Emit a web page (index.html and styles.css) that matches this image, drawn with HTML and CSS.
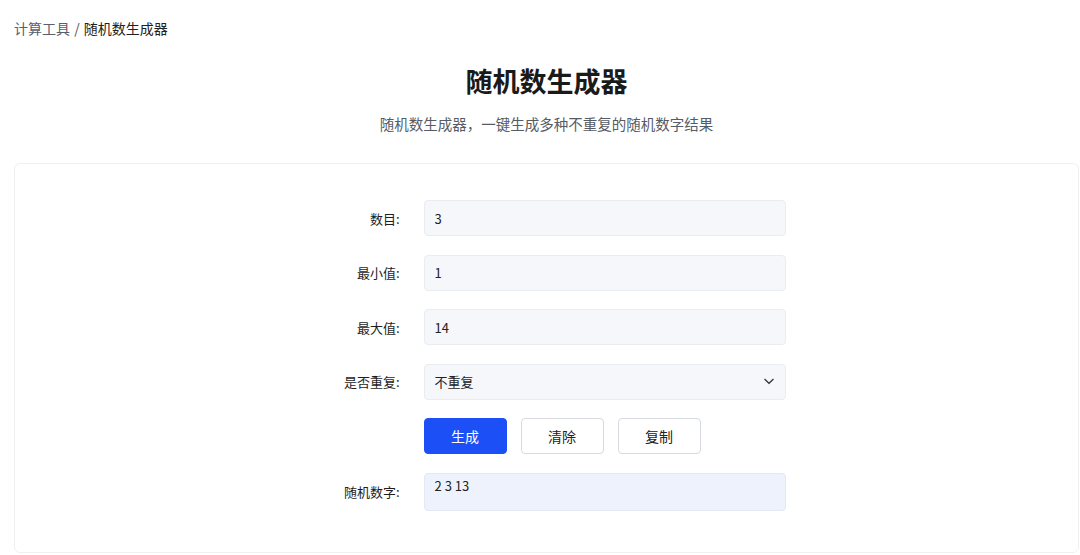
FILE: index.html
```html
<!DOCTYPE html>
<html lang="zh-CN">
<head>
    <meta charset="UTF-8">
    <meta name="viewport" content="width=device-width, initial-scale=1.0">
    <title>随机数生成器</title>
    <link rel="stylesheet" href="styles.css">
</head>
<body>
<div class="page">
    <div class="breadcrumb">
        <a href="#">计算工具</a>
        <span class="sep">/</span>
        <span class="current">随机数生成器</span>
    </div>

    <h1 class="title">随机数生成器</h1>
    <p class="subtitle">随机数生成器，一键生成多种不重复的随机数字结果</p>

    <div class="card">
        <form class="tool-form" id="randForm">
            <label for="count">数目:</label>
            <input type="text" id="count" value="3">

            <label for="min">最小值:</label>
            <input type="text" id="min" value="1">

            <label for="max">最大值:</label>
            <input type="text" id="max" value="14">

            <label for="repeat">是否重复:</label>
            <div class="select-wrap">
                <select id="repeat">
                    <option value="0">不重复</option>
                    <option value="1">可重复</option>
                </select>
                <svg class="arrow" width="12" height="12" viewBox="0 0 12 12"><path d="M1.5 4 6 8.3 10.5 4" fill="none" stroke="#333" stroke-width="1.2"/></svg>
            </div>

            <span></span>
            <div class="button-container">
                <button type="submit" class="primary">生成</button>
                <button type="button" id="clearBtn">清除</button>
                <button type="button" id="copyBtn">复制</button>
            </div>

            <label>随机数字:</label>
            <div class="result" id="result">2 3 13</div>
        </form>
    </div>
</div>
</body>
</html>
```

FILE: styles.css
```css
body {
    margin: 0;
    font-family: "Noto Sans CJK SC", "Noto Sans", sans-serif;
    color: #222;
    background: #fff;
}
.page {
    padding: 18px 1px 0 14px;
}
.breadcrumb {
    font-size: 14px;
    line-height: 20px;
}
.breadcrumb a {
    color: #566070;
    text-decoration: none;
}
.breadcrumb .sep {
    color: #555;
    margin: 0 1px;
}
.breadcrumb .current {
    color: #222;
}
.title {
    text-align: center;
    font-size: 27px;
    font-weight: 700;
    line-height: 40px;
    margin: 23px 0 0;
    color: #1a1a1a;
}
.subtitle {
    text-align: center;
    font-size: 14.5px;
    line-height: 20px;
    color: #555c66;
    margin: 13px 0 0;
}
.card {
    margin-top: 29px;
    border: 1px solid #eef0f3;
    border-radius: 6px;
    padding: 36px 0 41px;
}
.tool-form {
    width: 478px;
    margin: 0 auto;
    display: grid;
    grid-template-columns: 92px 362px;
    column-gap: 24px;
    row-gap: 18.5px;
    align-items: center;
    font-size: 13px;
}
.tool-form label {
    text-align: right;
    color: #1e1e1e;
}
input, select {
    box-sizing: border-box;
    width: 100%;
    height: 36px;
    padding: 0 10px;
    font: inherit;
    font-size: 13px;
    color: #222;
    background: #f5f7fa;
    border: 1px solid #e9ecf0;
    border-radius: 4px;
    outline: none;
}
.select-wrap {
    position: relative;
}
select {
    appearance: none;
    -webkit-appearance: none;
}
.select-wrap .arrow {
    position: absolute;
    right: 11px;
    top: 11px;
    pointer-events: none;
}
.button-container {
    display: flex;
    gap: 14px;
}
.button-container button {
    width: 83px;
    height: 36px;
    font: inherit;
    font-size: 14px;
    color: #222;
    background: #fff;
    border: 1px solid #d6d9de;
    border-radius: 4px;
}
.button-container .primary {
    background: #1c4ff5;
    border-color: #1c4ff5;
    color: #fff;
}
.result {
    box-sizing: border-box;
    min-height: 38px;
    padding: 2px 10px;
    line-height: 20px;
    background: #eef2fd;
    border: 1px solid #e3e8f5;
    border-radius: 4px;
    font-size: 13px;
}
```
